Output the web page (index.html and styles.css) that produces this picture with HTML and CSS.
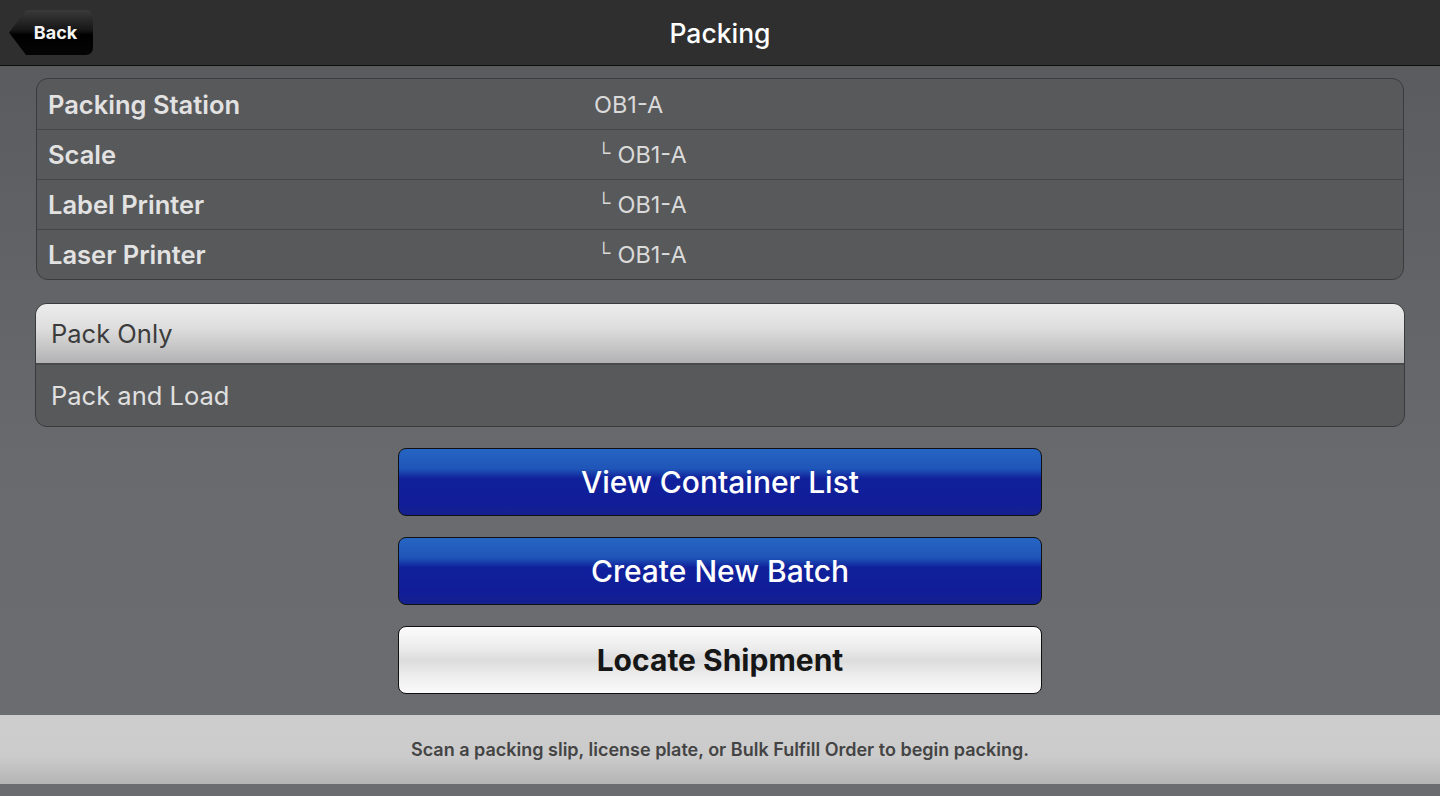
FILE: index.html
```html
<!DOCTYPE html>
<html>
<head>
<meta charset="utf-8">
<link rel="stylesheet" href="styles.css">
</head>
<body>
<header class="topbar">
  <button class="back">Back</button>
  <h1 class="title">Packing</h1>
</header>
<main class="content">
  <section class="info">
    <div class="row"><span class="label">Packing Station</span><span class="value">OB1-A</span></div>
    <div class="row"><span class="label">Scale</span><span class="value sub"><span class="corner">└</span>OB1-A</span></div>
    <div class="row"><span class="label">Label Printer</span><span class="value sub"><span class="corner">└</span>OB1-A</span></div>
    <div class="row"><span class="label">Laser Printer</span><span class="value sub"><span class="corner">└</span>OB1-A</span></div>
  </section>
  <section class="options">
    <div class="opt selected">Pack Only</div>
    <div class="opt">Pack and Load</div>
  </section>
  <section class="actions">
    <button class="btn blue">View Container List</button>
    <button class="btn blue">Create New Batch</button>
    <button class="btn white">Locate Shipment</button>
  </section>
</main>
<footer class="status">Scan a packing slip, license plate, or Bulk Fulfill Order to begin packing.</footer>
</body>
</html>
```
FILE: styles.css
```css
* { box-sizing: border-box; }
html, body { margin: 0; padding: 0; }
body {
  width: 1440px;
  height: 796px;
  overflow: hidden;
  font-family: Inter, "Noto Sans", sans-serif;
  background: linear-gradient(#58595b 0px, #636467 300px, #6a6b6e 500px, #6b6c6f 796px);
  display: flex;
  flex-direction: column;
}
.topbar {
  height: 66px;
  background: #2f2f2f;
  border-bottom: 1px solid #0c0c0c;
  display: flex;
  align-items: center;
  justify-content: center;
  position: relative;
  flex: none;
}
.title {
  margin: 0;
  color: #ffffff;
  font-size: 26.5px;
  font-weight: 500;
}
.back {
  position: absolute;
  left: 9px;
  top: 10px;
  width: 84px;
  height: 45px;
  border: none;
  padding: 0 0 0 9px;
  color: #f4f4f4;
  font-family: Inter, sans-serif;
  font-weight: 700;
  font-size: 18px;
  background: linear-gradient(#3a3a3a 0%, #161616 45%, #000 55%, #050505 100%);
  border-radius: 0 7px 7px 0;
  clip-path: polygon(17px 0, 100% 0, 100% 100%, 17px 100%, 0 50%);
}
.content {
  flex: 1;
  padding: 12px 35px 0;
  display: flex;
  flex-direction: column;
}
.info {
  margin: 0 1px;
  background: #58595b;
  border: 1px solid #3b3b3d;
  border-radius: 12px;
  overflow: hidden;
}
.row {
  height: 50px;
  display: grid;
  grid-template-columns: 546px 1fr;
  align-items: center;
  padding-left: 11px;
  border-top: 1px solid #444547;
}
.row:first-child { border-top: none; }
.label {
  color: #e2e2e2;
  font-size: 25.5px;
  font-weight: 600;
}
.value {
  color: #dadada;
  font-size: 23.5px;
  padding-left: 0;
}
.value.sub { padding-left: 3px; }
.corner {
  font-size: 19px;
  margin-right: 7px;
  position: relative;
  top: -4px;
}
.options {
  margin-top: 23px;
  border: 1px solid #3a3a3c;
  border-radius: 12px;
  overflow: hidden;
  background: #58595b;
}
.opt {
  height: 61px;
  display: flex;
  align-items: center;
  padding-left: 15px;
  font-size: 25.5px;
  color: #e0e0e0;
}
.opt.selected {
  height: 61px;
  color: #3c3c3c;
  background: linear-gradient(#ececec 0%, #dedede 40%, #b2b2b4 100%);
  border-bottom: 2px solid #4a4a4c;
}
.actions {
  margin-top: 21px;
  display: flex;
  flex-direction: column;
  align-items: center;
  gap: 21px;
}
.btn {
  width: 644px;
  height: 68px;
  border-radius: 8px;
  border: 1px solid #111;
  font-family: Inter, sans-serif;
  font-size: 30px;
  padding: 0;
}
.btn.blue {
  color: #ffffff;
  font-weight: 500;
  background: linear-gradient(#2665c3 0%, #1f55b8 30%, #10209b 45%, #111d98 80%, #15218f 100%);
}
.btn.white {
  color: #161616;
  font-weight: 700;
  background: linear-gradient(#fcfcfc 0%, #eaeaea 35%, #dcdcdc 50%, #eeeeee 75%, #fafafa 100%);
}
.status {
  flex: none;
  height: 69px;
  margin-bottom: 12px;
  display: flex;
  align-items: center;
  justify-content: center;
  color: #444;
  font-size: 18px;
  font-weight: 600;
  background: linear-gradient(#cdcdcd 0%, #cbcbcb 60%, #b4b4b4 100%);
}
```
